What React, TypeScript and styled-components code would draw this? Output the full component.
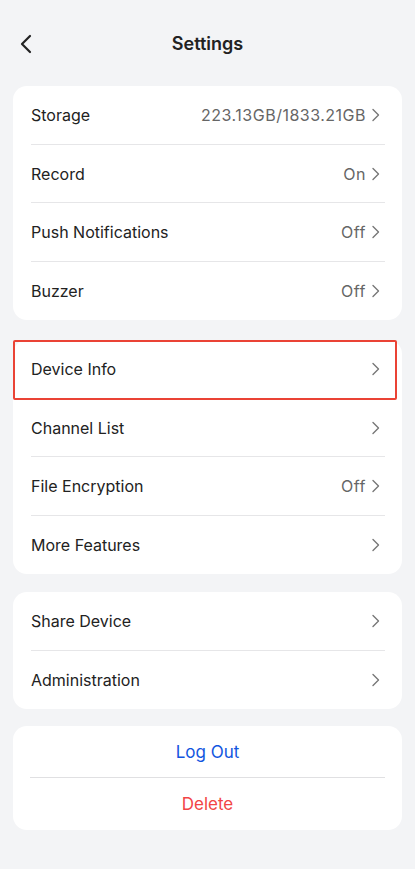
import React from 'react';
import styled, { createGlobalStyle } from 'styled-components';

const GlobalStyle = createGlobalStyle`
  html, body {
    margin: 0;
    padding: 0;
    background: #f3f4f6;
    font-family: Inter, "Noto Sans", sans-serif;
    -webkit-font-smoothing: antialiased;
  }
`;

const Page = styled.div`
  min-height: 869px;
  background: #f3f4f6;
  padding: 0 13px 30px;
  box-sizing: border-box;
`;

const Header = styled.header`
  display: flex;
  align-items: center;
  justify-content: center;
  height: 86px;
  position: relative;
  padding-bottom: 0;
  box-sizing: border-box;
`;

const BackButton = styled.button`
  position: absolute;
  left: 1px;
  top: 32px;
  width: 24px;
  height: 24px;
  padding: 0;
  border: none;
  background: none;
  display: flex;
  align-items: center;
  justify-content: center;
  color: #222;
`;

const Title = styled.h1`
  margin: 0;
  font-size: 18px;
  font-weight: 600;
  color: #222;
`;

const Card = styled.section<{ gap: number }>`
  position: relative;
  background: #fff;
  border-radius: 14px;
  margin-bottom: ${p => p.gap}px;
`;

const Row = styled.div<{ last?: boolean }>`
  position: relative;
  display: flex;
  align-items: center;
  height: 58.5px;
  padding: 0 22px 0 18px;

  &::after {
    content: '';
    display: ${p => (p.last ? 'none' : 'block')};
    position: absolute;
    left: 18px;
    right: 17px;
    bottom: 0;
    height: 1px;
    background: #e6e6e8;
  }
`;

const Label = styled.span`
  flex: 1;
  font-size: 16px;
  color: #222;
`;

const Value = styled.span`
  font-size: 16px;
  letter-spacing: 0.5px;
  color: #666;
  margin-right: 6px;
`;

const Chevron = styled.span`
  display: flex;
  align-items: center;
  color: #777;
`;

const Highlight = styled.div`
  position: absolute;
  left: 0;
  right: 5px;
  top: 0;
  height: 60px;
  border: 2px solid #ea4335;
  border-radius: 2px;
  box-sizing: border-box;
  pointer-events: none;
`;

const ActionRow = styled.button<{ tone: 'blue' | 'red'; last?: boolean }>`
  position: relative;
  display: flex;
  align-items: center;
  justify-content: center;
  width: 100%;
  height: 52px;
  border: none;
  background: none;
  font-family: inherit;
  font-size: 17px;
  color: ${p => (p.tone === 'blue' ? '#1256e0' : '#f24545')};

  &::after {
    content: '';
    display: ${p => (p.last ? 'none' : 'block')};
    position: absolute;
    left: 17px;
    right: 17px;
    bottom: 0;
    height: 1px;
    background: #e0e0e2;
  }
`;

const ChevronIcon = () => (
  <svg width="8" height="14" viewBox="0 0 8 14" fill="none">
    <path d="M1 1.5L6.5 7L1 12.5" stroke="currentColor" strokeWidth="1.4" strokeLinecap="round" strokeLinejoin="round" />
  </svg>
);

type Item = { label: string; value?: string };

const groups: { gap: number; items: Item[] }[] = [
  {
    gap: 20,
    items: [
      { label: 'Storage', value: '223.13GB/1833.21GB' },
      { label: 'Record', value: 'On' },
      { label: 'Push Notifications', value: 'Off' },
      { label: 'Buzzer', value: 'Off' },
    ],
  },
  {
    gap: 18,
    items: [
      { label: 'Device Info' },
      { label: 'Channel List' },
      { label: 'File Encryption', value: 'Off' },
      { label: 'More Features' },
    ],
  },
  { gap: 17, items: [{ label: 'Share Device' }, { label: 'Administration' }] },
];

export default function App() {
  return (
    <>
      <GlobalStyle />
      <Page>
        <Header>
          <BackButton aria-label="Back">
            <svg width="14" height="20" viewBox="0 0 14 20" fill="none">
              <path d="M11 2L3 10L11 18" stroke="currentColor" strokeWidth="2.2" strokeLinecap="round" strokeLinejoin="round" />
            </svg>
          </BackButton>
          <Title>Settings</Title>
        </Header>

        {groups.map((group, gi) => (
          <Card key={gi} gap={group.gap}>
            {group.items.map((item, i) => (
              <Row key={item.label} last={i === group.items.length - 1}>
                <Label>{item.label}</Label>
                {item.value && <Value>{item.value}</Value>}
                <Chevron>
                  <ChevronIcon />
                </Chevron>
              </Row>
            ))}
            {gi === 1 && <Highlight />}
          </Card>
        ))}

        <Card gap={0}>
          <ActionRow tone="blue">Log Out</ActionRow>
          <ActionRow tone="red" last>Delete</ActionRow>
        </Card>
      </Page>
    </>
  );
}
